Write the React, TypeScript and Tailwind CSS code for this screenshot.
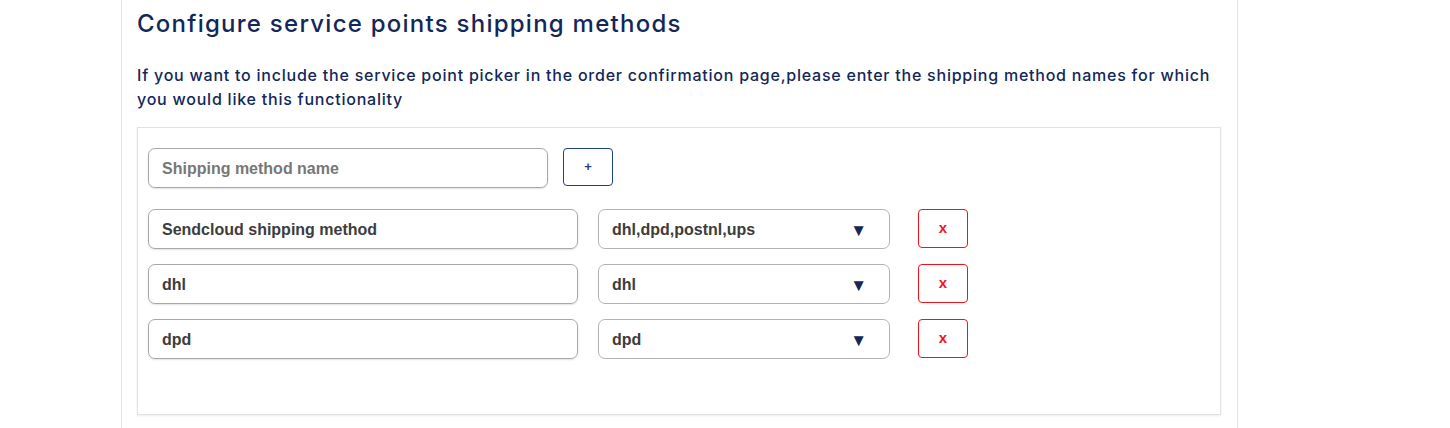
const rows = [
  { name: 'Sendcloud shipping method', carriers: 'dhl,dpd,postnl,ups' },
  { name: 'dhl', carriers: 'dhl' },
  { name: 'dpd', carriers: 'dpd' },
];

export default function App() {
  return (
    <div className="min-h-[428px] bg-white">
      <div className="ml-[121px] w-[1117px] min-h-[428px] border-x border-[#e3e3e3] pl-[15px] pr-[15px]">
        <h2 className="pt-[8px] text-[24px] leading-[32px] text-[#13275a] font-['Inter',sans-serif] font-medium tracking-[0.052em]">
          Configure service points shipping methods
        </h2>
        <p className="mt-[23px] text-[16px] leading-[24px] text-[#13275a] font-['Inter',sans-serif] font-medium tracking-[0.048em]">
          If you want to include the service point picker in the order confirmation page,please enter the shipping method names for which you would like this functionality
        </p>

        <div className="mt-[16px] mr-[1px] h-[288px] border border-[#e2e2e2] shadow-[0_1px_2px_rgba(0,0,0,0.08)] px-[10px] pt-[20px] font-['Liberation_Sans',Arial,sans-serif]">
          <div className="flex items-start gap-[15px]">
            <input
              readOnly
              placeholder="Shipping method name"
              className="w-[400px] h-[40px] rounded-[7px] border border-[#a8a8a8] shadow-[0_1px_2px_rgba(0,0,0,0.12)] px-[13px] pt-[2px] text-[16px] font-bold text-[#3d3d3d] placeholder:text-[#777777] outline-none"
            />
            <button className="w-[50px] h-[38px] rounded-[4px] border border-[#1d3f8a] text-[#1d3f8a] text-[13px] font-bold bg-white">
              +
            </button>
          </div>

          <div className="mt-[21px] flex flex-col gap-[15px]">
            {rows.map((r) => (
              <div key={r.name} className="flex items-start">
                <div className="w-[430px] h-[40px] rounded-[7px] border border-[#a8a8a8] shadow-[0_1px_2px_rgba(0,0,0,0.12)] px-[13px] pt-[2px] flex items-center text-[16px] font-bold text-[#3d3d3d]">
                  {r.name}
                </div>
                <div className="ml-[20px] w-[292px] h-[40px] rounded-[7px] border border-[#b3b3b3] pl-[13px] pr-[22px] pt-[2px] flex items-center justify-between text-[16px] font-bold text-[#3d3d3d]">
                  <span>{r.carriers}</span>
                  <span className="text-[#13275a] text-[17px] leading-none">▼</span>
                </div>
                <button className="ml-[28px] w-[50px] h-[39px] rounded-[4px] border border-[#f0141e] text-[#f0141e] text-[15px] font-bold bg-white">
                  x
                </button>
              </div>
            ))}
          </div>
        </div>
      </div>
    </div>
  );
}
